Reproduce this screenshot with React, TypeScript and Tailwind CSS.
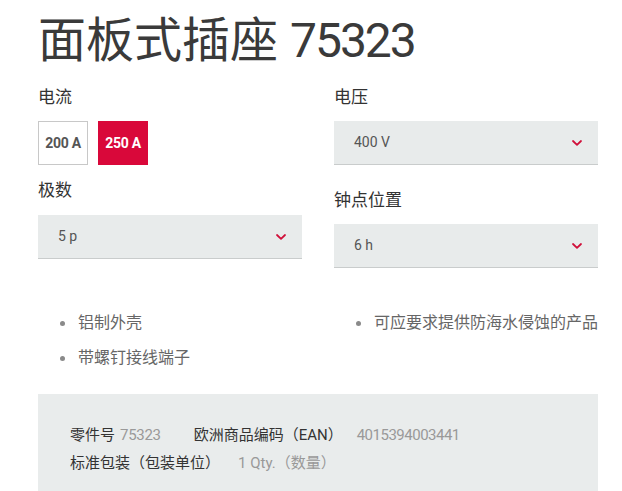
import React from "react";

const cjk = '"Roboto", "Noto Sans CJK SC", sans-serif';

function Chevron() {
  return (
    <svg width="10" height="6" viewBox="0 0 10 6" className="shrink-0">
      <path d="M1 1 L5 4.8 L9 1" fill="none" stroke="#d0103a" strokeWidth="1.8" strokeLinecap="round" strokeLinejoin="round" />
    </svg>
  );
}

function Select({ value }: { value: string }) {
  return (
    <div className="flex h-[44px] items-center justify-between border-b border-[#c9cccc] bg-[#e8ebeb] pl-[20px] pr-[16px]">
      <span className="text-[14px] text-[#555]">{value}</span>
      <Chevron />
    </div>
  );
}

function Bullet({ text }: { text: string }) {
  return (
    <li className="flex h-[22px] items-center text-[16px] leading-[22px] text-[#666]">
      <span className="ml-[22px] mr-[13px] inline-block h-[5px] w-[5px] shrink-0 rounded-full bg-[#8a8a8a]" />
      {text}
    </li>
  );
}

export default function App() {
  return (
    <div className="h-[491px] w-[622px] overflow-hidden bg-white pl-[38px] pr-[24px]" style={{ fontFamily: cjk }}>
      <h1 className="pt-[12px] text-[48px] leading-[57px] text-[#3a3a3a]">
        面板式插座 <span className="tracking-[-2px]">75323</span>
      </h1>
      <div className="mt-[16px] grid grid-cols-2 gap-x-[32px]">
        <div>
          <div className="h-[24px] text-[17px] leading-[24px] text-[#333]">电流</div>
          <div className="mt-[12px] flex gap-[10px]">
            <div className="flex h-[44px] w-[50px] items-center justify-center border border-[#c8c8c8] text-[14px] font-bold tracking-[-0.3px] text-[#555]">200 A</div>
            <div className="flex h-[44px] w-[50px] items-center justify-center bg-[#d9083a] text-[14px] font-bold tracking-[-0.3px] text-white">250 A</div>
          </div>
          <div className="mt-[13px] h-[24px] text-[17px] leading-[24px] text-[#333]">极数</div>
          <div className="mt-[13px]">
            <Select value="5 p" />
          </div>
        </div>
        <div>
          <div className="h-[24px] text-[17px] leading-[24px] text-[#333]">电压</div>
          <div className="mt-[12px]">
            <Select value="400 V" />
          </div>
          <div className="mt-[23px] h-[24px] text-[17px] leading-[24px] text-[#333]">钟点位置</div>
          <div className="mt-[12px]">
            <Select value="6 h" />
          </div>
        </div>
      </div>
      <div className="mt-[44px] grid grid-cols-2 gap-x-[32px]">
        <ul className="flex flex-col gap-[13px]">
          <Bullet text="铝制外壳" />
          <Bullet text="带螺钉接线端子" />
        </ul>
        <ul className="flex flex-col gap-[13px]">
          <Bullet text="可应要求提供防海水侵蚀的产品" />
        </ul>
      </div>
      <div className="mt-[25px] h-[120px] bg-[#e9ecec] pl-[32px] pt-[27px] text-[15px] leading-[28px] text-[#333]">
        <div className="flex">
          <span>零件号</span>
          <span className="ml-[5px] tracking-[-0.3px] text-[#999]">75323</span>
          <span className="ml-[33px]">欧洲商品编码（EAN）</span>
          <span className="ml-[14px] tracking-[-0.5px] text-[#999]">4015394003441</span>
        </div>
        <div className="flex">
          <span>标准包装（包装单位）</span>
          <span className="ml-[18px] text-[#999]">1 Qty.（数量）</span>
        </div>
      </div>
    </div>
  );
}
